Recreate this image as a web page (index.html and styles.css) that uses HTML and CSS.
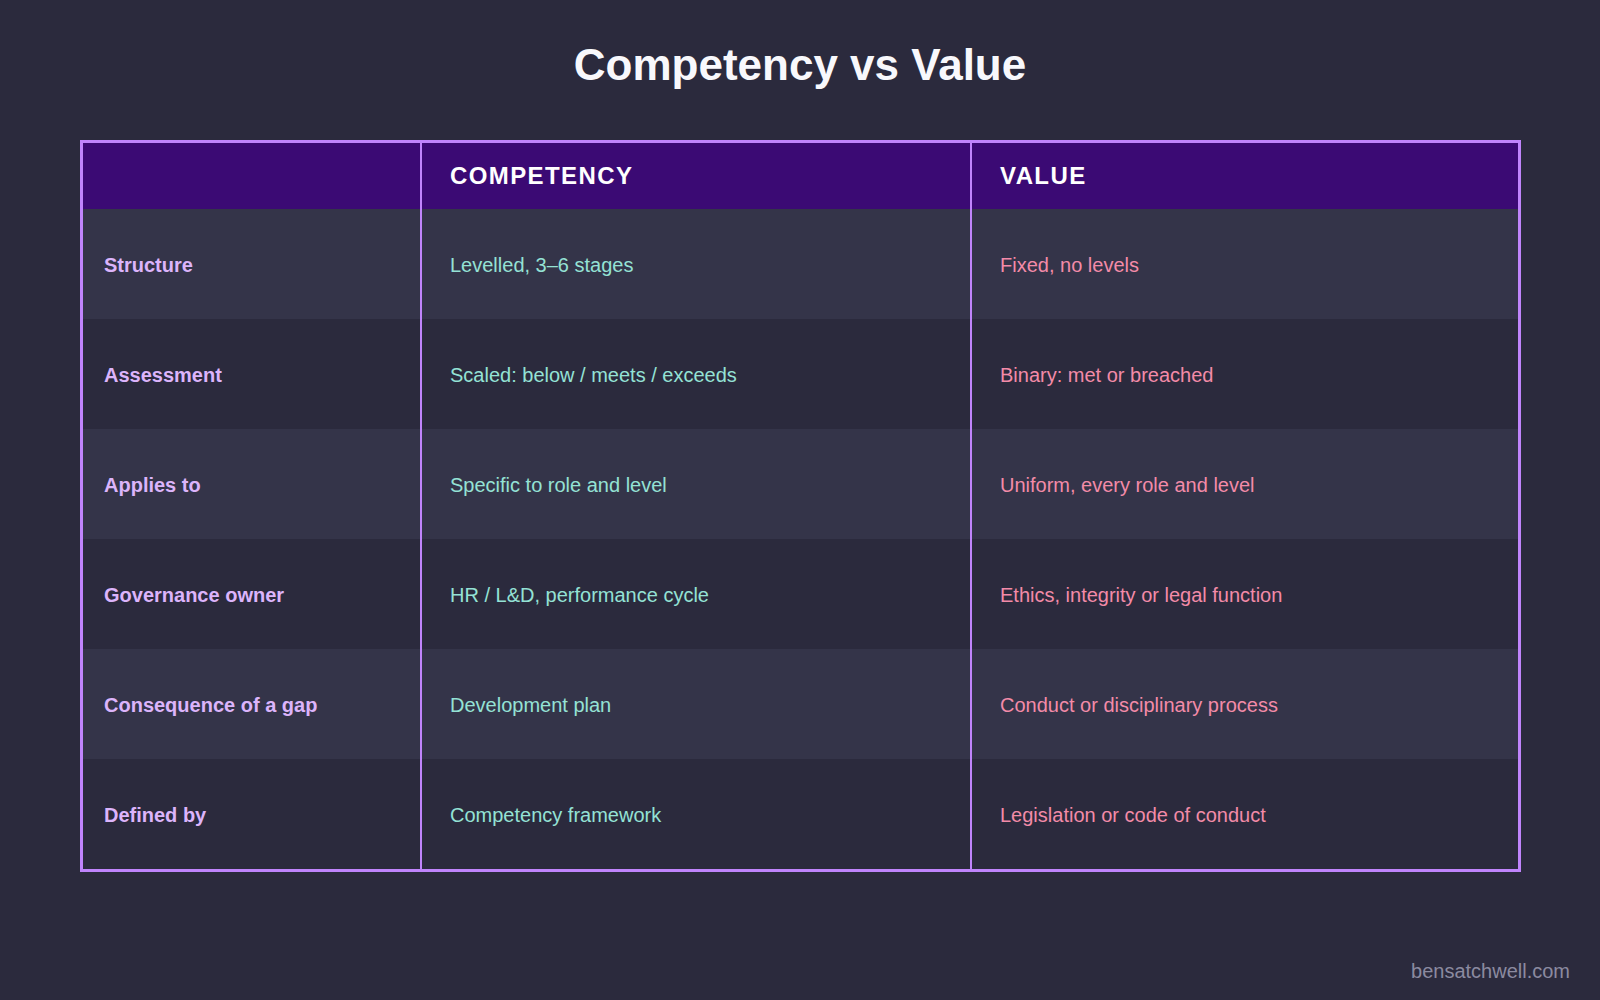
FILE: index.html
```html
<!DOCTYPE html>
<html lang="en">
<head>
<meta charset="utf-8">
<title>Competency vs Value</title>
<link rel="stylesheet" href="styles.css">
</head>
<body>
<main class="page">
  <h1 class="title">Competency vs Value</h1>
  <div class="table">
    <div class="cell head label-col"></div>
    <div class="cell head">COMPETENCY</div>
    <div class="cell head">VALUE</div>

    <div class="cell odd label">Structure</div>
    <div class="cell odd comp">Levelled, 3–6 stages</div>
    <div class="cell odd val">Fixed, no levels</div>

    <div class="cell even label">Assessment</div>
    <div class="cell even comp">Scaled: below / meets / exceeds</div>
    <div class="cell even val">Binary: met or breached</div>

    <div class="cell odd label">Applies to</div>
    <div class="cell odd comp">Specific to role and level</div>
    <div class="cell odd val">Uniform, every role and level</div>

    <div class="cell even label">Governance owner</div>
    <div class="cell even comp">HR / L&amp;D, performance cycle</div>
    <div class="cell even val">Ethics, integrity or legal function</div>

    <div class="cell odd label">Consequence of a gap</div>
    <div class="cell odd comp">Development plan</div>
    <div class="cell odd val">Conduct or disciplinary process</div>

    <div class="cell even label">Defined by</div>
    <div class="cell even comp">Competency framework</div>
    <div class="cell even val">Legislation or code of conduct</div>
  </div>
  <footer class="footer">bensatchwell.com</footer>
</main>
</body>
</html>
```

FILE: styles.css
```css
html, body {
  margin: 0;
  padding: 0;
  background: #2b2a3d;
}

body {
  font-family: "Liberation Sans", Arial, sans-serif;
}

.page {
  display: flex;
  flex-direction: column;
  min-height: 1000px;
  box-sizing: border-box;
}

.title {
  margin: 0;
  padding-top: 40px;
  font-size: 44px;
  line-height: 50px;
  font-weight: 700;
  text-align: center;
  color: #f8f8fc;
}

.table {
  margin: 50px 79px 0 80px;
  border: 3px solid #c084fc;
  display: grid;
  grid-template-columns: 337px 550px 1fr;
  grid-template-rows: 66px repeat(6, 110px);
}

.cell {
  display: flex;
  align-items: center;
  padding: 1px 20px 0 28px;
  font-size: 20px;
  line-height: 24px;
}

.cell:nth-child(3n+2),
.cell:nth-child(3n) {
  border-left: 2px solid #c084fc;
}

.head {
  padding-top: 0;
  background: #3b0a74;
  color: #ffffff;
  font-weight: 700;
  font-size: 24px;
  letter-spacing: 1.4px;
}

.odd {
  background: #343449;
}

.even {
  background: #2b2a3d;
}

.label {
  padding-left: 21px;
  font-weight: 700;
  color: #dcb4fb;
}

.comp {
  color: #94e2d5;
}

.val {
  color: #f38ba8;
}

.footer {
  margin-top: auto;
  padding: 0 30px 18px 0;
  text-align: right;
  font-size: 20px;
  line-height: 22px;
  color: #8b8aa0;
}
```
